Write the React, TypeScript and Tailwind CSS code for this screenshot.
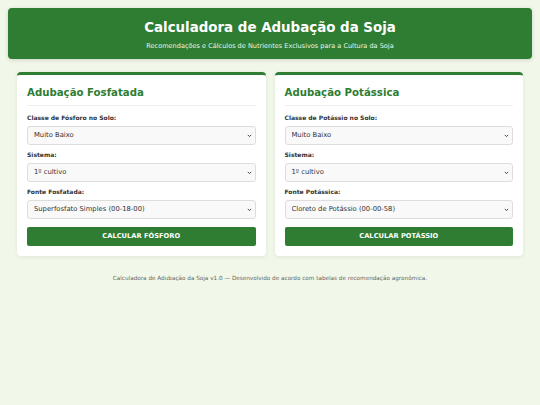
const font = { fontFamily: '"DejaVu Sans", Verdana, sans-serif' };

interface Field {
  label: string;
  value: string;
  options: string[];
}

interface CardProps {
  title: string;
  fields: Field[];
  button: string;
}

function Card({ title, fields, button }: CardProps) {
  return (
    <div className="flex-1 rounded-[4px] border-t-[3px] border-[#2e7d32] bg-white px-[10px] pt-[11px] pb-[10px] shadow-[0_1px_4px_rgba(0,0,0,0.08)]">
      <h2 className="border-b border-[#eeeeee] pb-[5px] text-[10.2px] font-bold leading-[14px] text-[#2e7d32]">
        {title}
      </h2>
      <div className="mt-[8px] flex flex-col gap-[6px]">
        {fields.map((f) => (
          <div key={f.label} className="flex flex-col">
            <label className="mb-[4px] text-[6px] font-bold leading-[8px] text-[#333333]">{f.label}</label>
            <div className="relative">
              <select
                defaultValue={f.value}
                className="block h-[19px] w-full appearance-none rounded-[3px] border border-[#dddddd] bg-[#f9f9f9] pl-[6px] pr-[12px] text-[6.8px] text-[#333333] outline-none"
                style={font}
              >
                {f.options.map((o) => (
                  <option key={o}>{o}</option>
                ))}
              </select>
              <svg
                className="pointer-events-none absolute right-[4px] top-[8px]"
                width="5"
                height="4"
                viewBox="0 0 5 4"
              >
                <path d="M0.8 0.9 L2.5 2.6 L4.2 0.9" fill="none" stroke="#444" strokeWidth="1" />
              </svg>
            </div>
          </div>
        ))}
      </div>
      <button
        className="mt-[8px] block h-[19px] w-full rounded-[2px] bg-[#2e7d32] text-[6.7px] font-bold uppercase text-white"
        style={font}
      >
        {button}
      </button>
    </div>
  );
}

export default function App() {
  const classes = ["Muito Baixo", "Baixo", "Médio", "Alto", "Muito Alto"];
  const sistemas = ["1º cultivo", "2º cultivo"];

  return (
    <div className="min-h-[405px] bg-[#f1f8e9] p-[8px]" style={font}>
      <header className="flex h-[51px] flex-col items-center rounded-[4px] bg-[#2e7d32] pt-[12px] text-white shadow-[0_1px_4px_rgba(0,0,0,0.15)]">
        <h1 className="text-[13.4px] font-bold leading-[16px]">Calculadora de Adubação da Soja</h1>
        <p className="mt-[6px] text-[6.55px] leading-[8px] text-[#e8f5e9]">
          Recomendações e Cálculos de Nutrientes Exclusivos para a Cultura da Soja
        </p>
      </header>

      <main className="mx-[9px] mt-[13px] flex gap-[9px]">
        <Card
          title="Adubação Fosfatada"
          button="Calcular Fósforo"
          fields={[
            { label: "Classe de Fósforo no Solo:", value: "Muito Baixo", options: classes },
            { label: "Sistema:", value: "1º cultivo", options: sistemas },
            {
              label: "Fonte Fosfatada:",
              value: "Superfosfato Simples (00-18-00)",
              options: ["Superfosfato Simples (00-18-00)", "Superfosfato Triplo (00-41-00)", "MAP (11-52-00)"],
            },
          ]}
        />
        <Card
          title="Adubação Potássica"
          button="Calcular Potássio"
          fields={[
            { label: "Classe de Potássio no Solo:", value: "Muito Baixo", options: classes },
            { label: "Sistema:", value: "1º cultivo", options: sistemas },
            {
              label: "Fonte Potássica:",
              value: "Cloreto de Potássio (00-00-58)",
              options: ["Cloreto de Potássio (00-00-58)", "Sulfato de Potássio (00-00-50)"],
            },
          ]}
        />
      </main>

      <footer className="mt-[18px] text-center text-[5.7px] leading-[8px] text-[#666666]">
        Calculadora de Adubação da Soja v1.0 — Desenvolvido de acordo com tabelas de recomendação agronômica.
      </footer>
    </div>
  );
}
